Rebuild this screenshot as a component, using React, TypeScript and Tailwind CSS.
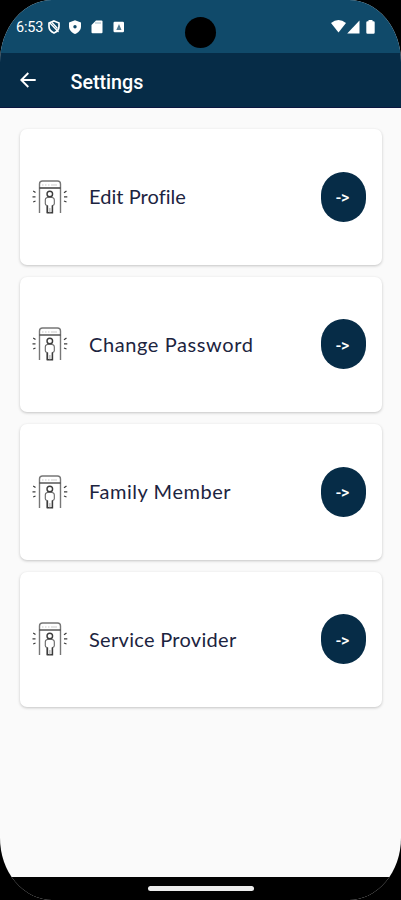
import React from 'react';

const items = [
  { label: 'Edit Profile', tracking: 'tracking-[0.05px]' },
  { label: 'Change Password', tracking: 'tracking-[0.6px]' },
  { label: 'Family Member', tracking: 'tracking-[0.55px]' },
  { label: 'Service Provider', tracking: 'tracking-[0.3px]' },
];

const ScannerIcon: React.FC = () => (
  <svg width="36" height="36" viewBox="0 0 36 36" fill="none" stroke="#3c3c3c" strokeWidth="1.1" className="shrink-0">
    <path d="M7.5 34V5q0-3 3-3h15q3 0 3 3v29" stroke="#777" strokeWidth="1.4" />
    <path d="M7.5 9h21" strokeWidth="1.3" />
    <path d="M10 6h1.5M13 6h1.5M16 6h1.5M19 6h6" stroke="#ccc" />
    <circle cx="17.8" cy="15" r="2.8" strokeWidth="1.4" />
    <path d="M15.7 18.5h4.200q2.200 0 2.400 2.300v4q0 1.500-1.800 1.700v7h-5.400v-7q-1.800-.2-1.800-1.700v-4q.2-2.300 2.400-2.300z" stroke="#666" />
    <path d="M15.400 26.500v7.200h5V26.500" strokeWidth="1.500" />
    <path d="M17.900 29v4.500" stroke="#aaa" />
    <path d="M1.200 12l2.300 1.500M.5 17.800h3M1.200 23l2.300-1M34.500 12l-2.500 1.700M32 17.800h3.300M32 22l2.500 1" strokeWidth="1.300" />
  </svg>
);

const StatusBar: React.FC = () => (
  <div className="relative flex h-[53px] items-start justify-between bg-[#104a6a] pl-4 pr-[26px] pt-5 text-white">
    <div className="flex h-[14px] items-center">
      <span className="w-[31px] pt-0.5 text-[14.5px] leading-[14px] tracking-[-0.2px]">6:53</span>
      <svg width="14" height="14" viewBox="0 0 14 14" fill="none" stroke="currentColor">
        <path d="M7 1l5 2v3.600c0 3-2.200 5.300-5 6.400-2.800-1.100-5-3.400-5-6.400V3z" strokeWidth="1.700" />
        <path d="M2.500 2.500l9 9.500M5 2.500l5.500 6" strokeWidth="1.300" />
      </svg>
      <svg width="14" height="14" viewBox="0 0 14 14" className="ml-[7px]">
        <path d="M7 .2l6 2.300v4c0 3.600-2.600 6.100-6 7.500-3.400-1.400-6-3.900-6-7.500v-4z" fill="currentColor" />
        <circle cx="7" cy="6.700" r="1.700" fill="#104a6a" />
      </svg>
      <svg width="12" height="14" viewBox="0 0 12 14" className="ml-[9px]">
        <path d="M5 .5h5.500q1 0 1 1v10.800q0 1-1 1h-9q-1 0-1-1V5z" fill="currentColor" />
        <path d="M5 2v2M7 2v2M9 2v2" stroke="#9fb8c5" />
      </svg>
      <svg width="12" height="12" viewBox="0 0 12 12" className="ml-[10px]">
        <rect x=".5" y=".8" width="10.500" height="10.500" rx="1.200" fill="currentColor" />
        <path d="M3.300 9L6 3l2.500 6zM5 6h2" fill="#517b92" />
      </svg>
    </div>
    <div className="absolute left-[185px] top-[17px] size-[31px] rounded-full bg-black" />
    <div className="flex">
      <svg width="15" height="13" viewBox="0 0 15 13" fill="currentColor">
        <path d="M0 3Q7.500-3 15 3L7.500 12.500z" />
      </svg>
      <svg width="13" height="14" viewBox="0 0 13 14" fill="currentColor" className="ml-px">
        <path d="M12.500.5v13H.2z" />
      </svg>
      <svg width="9" height="14" viewBox="0 0 9 14" fill="currentColor" className="ml-[6px]">
        <path d="M2.500 0h4v1.300h1q1.200 0 1.200 1.200v10q0 1.300-1.200 1.300h-6Q.3 13.800.3 12.500v-10q0-1.200 1.200-1.200h1z" />
      </svg>
    </div>
  </div>
);

const App: React.FC = () => {
  return (
    <div className="h-[900px] w-[401px] bg-black font-[Roboto,sans-serif]">
      <div className="flex h-full flex-col overflow-hidden rounded-[52px/62px] bg-[#fafafa]">
        <StatusBar />

        <header className="flex h-[55px] items-center border-b border-[#0b1740] bg-[#062c47] pl-5 text-white">
          <svg width="16" height="16" viewBox="0 0 16 16" fill="none" stroke="currentColor" strokeWidth="1.900">
            <path d="M15.700 8H1.500M8.300 1L1.300 8l7 7" />
          </svg>
          <h1 className="ml-[34.5px] mt-[5px] text-[19.7px] font-medium leading-6">Settings</h1>
        </header>

        <main className="flex flex-1 flex-col gap-3 px-5 pt-[21px]">
          {items.map((item) => (
            <div
              key={item.label}
              className="flex h-[135.5px] w-[362px] items-center rounded-[7px] bg-white pl-3 pr-4 shadow-[0_1px_3px_rgba(0,0,0,0.22)]"
            >
              <ScannerIcon />
              <span
                className={`mb-[1.5px] ml-[21px] flex-1 whitespace-nowrap font-[Lato,sans-serif] text-[20px] leading-6 text-[#1c2440] ${item.tracking}`}
              >
                {item.label}
              </span>
              <button className="h-[50px] w-[45px] rounded-[22.5px/23px] bg-[#062c47] pr-0.5 pt-[3px] text-[16px] font-medium text-white">
                {'->'}
              </button>
            </div>
          ))}
        </main>

        <div className="flex h-[23px] items-center justify-center bg-black">
          <div className="h-[5px] w-[106px] rounded-sm bg-[#ececec]" />
        </div>
      </div>
    </div>
  );
};

export default App;
